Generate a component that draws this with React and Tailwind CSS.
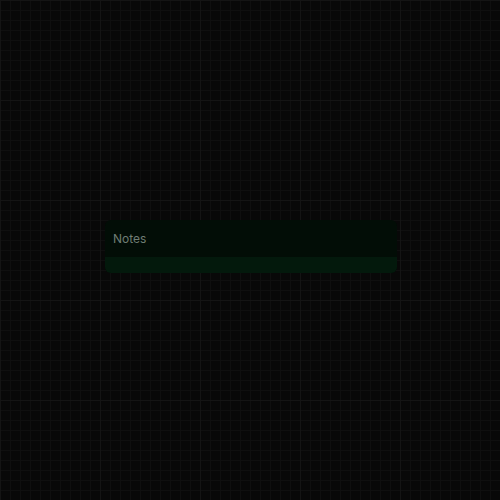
import React from 'react';

const NotesCard = () => {
  return (
    <div className="w-[292px] rounded-md overflow-hidden bg-[#020d06]">
      <div className="h-[37px] px-2 pt-[11px]">
        <span className="block text-[12px] leading-4 text-[#6f7d74]">Notes</span>
      </div>
      <div className="h-4 bg-[#03190c]" />
    </div>
  );
};

export default function App() {
  return (
    <div
      className="h-[500px] w-full flex items-center justify-center bg-[#080808] bg-[linear-gradient(to_right,#141414_1px,transparent_1px),linear-gradient(to_bottom,#141414_1px,transparent_1px),linear-gradient(to_right,#0f0f0f_1px,transparent_1px),linear-gradient(to_bottom,#0f0f0f_1px,transparent_1px)] bg-[size:100px_100px,100px_100px,10px_10px,10px_10px]"
      style={{ fontFamily: 'Inter, "Noto Sans", sans-serif' }}
    >
      <div className="ml-[2px] mt-[-7px]">
        <NotesCard />
      </div>
    </div>
  );
}
